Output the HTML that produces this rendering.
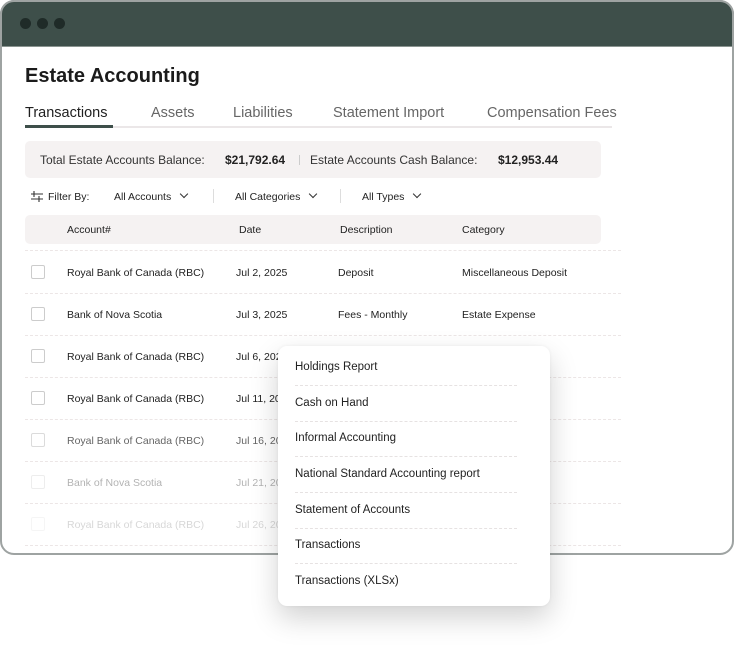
<!DOCTYPE html>
<html><head><style>
*{margin:0;padding:0;box-sizing:border-box}
body{width:752px;height:654px;background:#fff;font-family:"Liberation Sans",sans-serif;position:relative;overflow:hidden;color:#222}
.win{position:absolute;left:0;top:0;width:734px;height:555px;border-radius:14px;overflow:hidden;background:#fff}
.frame{position:absolute;left:0;top:0;width:734px;height:555px;border:2px solid #9ea3a2;border-radius:14px;pointer-events:none}
.bar{position:absolute;left:0;top:0;width:734px;height:47px;background:#3e4f4a;border-radius:14px 14px 0 0;border-bottom:1px solid #8a9490}
.dot{position:absolute;top:18px;width:11px;height:11px;border-radius:50%;background:#1f2b28}
.a{position:absolute;white-space:nowrap}
h1{position:absolute;left:25px;top:65px;font-size:20px;font-weight:bold;color:#1b1b1b}
.tab{position:absolute;top:105px;font-size:14.5px;color:#666}
.tabline{position:absolute;left:25px;top:126px;width:587px;height:2px;background:#ebe7e8}
.sum{position:absolute;left:25px;top:141px;width:576px;height:37px;background:#f5f2f2;border-radius:5px}
.hdr{position:absolute;left:25px;top:215px;width:576px;height:29px;background:#f5f2f2;border-radius:5px}
.sep{position:absolute;left:25px;width:596px;border-top:1px dashed #ece6e6}
.cb{position:absolute;left:31px;width:14px;height:14px;border:1px solid #ccc;border-radius:2px}
.r{position:absolute;font-size:10.5px;color:#222;white-space:nowrap}
.menu{position:absolute;left:278px;top:346px;width:272px;height:260px;background:#fff;border-radius:9px;box-shadow:0 12px 28px rgba(0,0,0,.18),0 0 3px rgba(0,0,0,.06)}
.mi{position:absolute;left:17px;font-size:11.5px;color:#222;white-space:nowrap}
.ms{position:absolute;left:17px;width:222px;border-top:1px dashed #e6e2e2}
.chev{display:inline-block;width:6px;height:6px;border-right:1.3px solid #333;border-bottom:1.3px solid #333;transform:rotate(45deg);margin-left:10px;position:relative;top:-3px}
</style></head><body>
<div class="win">
<div class="bar"><div class="dot" style="left:20px"></div><div class="dot" style="left:37px"></div><div class="dot" style="left:54px"></div></div>
<h1>Estate Accounting</h1>
<div class="tab" style="left:25px;color:#1f1f1f">Transactions</div>
<div class="tab" style="left:151px">Assets</div>
<div class="tab" style="left:233px">Liabilities</div>
<div class="tab" style="left:333px">Statement Import</div>
<div class="tab" style="left:487px">Compensation Fees</div>
<div class="tabline"></div>
<div style="position:absolute;left:25px;top:125px;width:88px;height:3px;background:#3e4f4a"></div>
<div class="sum"></div>
<div class="a" style="left:40px;top:153px;font-size:12px;color:#333">Total Estate Accounts Balance:</div>
<div class="a" style="left:225px;top:153px;font-size:12px;font-weight:bold">$21,792.64</div>
<div style="position:absolute;left:299px;top:155px;width:1px;height:10px;background:#ccc"></div>
<div class="a" style="left:310px;top:153px;font-size:12px;color:#333">Estate Accounts Cash Balance:</div>
<div class="a" style="left:498px;top:153px;font-size:12px;font-weight:bold">$12,953.44</div>
<svg style="position:absolute;left:31px;top:191px" width="12" height="11" viewBox="0 0 12 11"><path d="M0 3H12M0 8H12M3 0V6M8 5V11" stroke="#333" stroke-width="1.1" fill="none"/></svg>
<div class="r" style="left:48px;top:191px">Filter By:</div>
<div class="r" style="left:114px;top:191px">All Accounts<span class="chev"></span></div>
<div style="position:absolute;left:213px;top:189px;width:1px;height:14px;background:#ddd"></div>
<div class="r" style="left:235px;top:191px">All Categories<span class="chev"></span></div>
<div style="position:absolute;left:340px;top:189px;width:1px;height:14px;background:#ddd"></div>
<div class="r" style="left:362px;top:191px">All Types<span class="chev"></span></div>
<div class="hdr"></div>
<div class="r" style="left:67px;top:224px">Account#</div>
<div class="r" style="left:239px;top:224px">Date</div>
<div class="r" style="left:340px;top:224px">Description</div>
<div class="r" style="left:462px;top:224px">Category</div>
<div class="sep" style="top:250px"></div><div class="sep" style="top:293px"></div><div class="sep" style="top:335px"></div><div class="sep" style="top:377px"></div><div class="sep" style="top:419px"></div><div class="sep" style="top:461px"></div><div class="sep" style="top:503px"></div><div class="sep" style="top:545px"></div>
<div class="cb" style="top:265px"></div><div class="r" style="left:67px;top:267px">Royal Bank of Canada (RBC)</div><div class="r" style="left:236px;top:267px">Jul 2, 2025</div><div class="r" style="left:338px;top:267px">Deposit</div><div class="r" style="left:462px;top:267px">Miscellaneous Deposit</div>
<div class="cb" style="top:307px"></div><div class="r" style="left:67px;top:309px">Bank of Nova Scotia</div><div class="r" style="left:236px;top:309px">Jul 3, 2025</div><div class="r" style="left:338px;top:309px">Fees - Monthly</div><div class="r" style="left:462px;top:309px">Estate Expense</div>
<div class="cb" style="top:349px"></div><div class="r" style="left:67px;top:351px">Royal Bank of Canada (RBC)</div><div class="r" style="left:236px;top:351px">Jul 6, 2025</div>
<div class="cb" style="top:391px"></div><div class="r" style="left:67px;top:393px">Royal Bank of Canada (RBC)</div><div class="r" style="left:236px;top:393px">Jul 11, 2025</div>
<div style="opacity:.7"><div class="cb" style="top:433px"></div><div class="r" style="left:67px;top:435px">Royal Bank of Canada (RBC)</div><div class="r" style="left:236px;top:435px">Jul 16, 2025</div></div>
<div style="opacity:.35"><div class="cb" style="top:475px"></div><div class="r" style="left:67px;top:477px">Bank of Nova Scotia</div><div class="r" style="left:236px;top:477px">Jul 21, 2025</div></div>
<div style="opacity:.18"><div class="cb" style="top:517px"></div><div class="r" style="left:67px;top:519px">Royal Bank of Canada (RBC)</div><div class="r" style="left:236px;top:519px">Jul 26, 2025</div></div>
</div>
<div class="frame"></div>
<div class="menu">
<div class="mi" style="top:15px">Holdings Report</div><div class="ms" style="top:39px"></div>
<div class="mi" style="top:51px">Cash on Hand</div><div class="ms" style="top:75px"></div>
<div class="mi" style="top:86px">Informal Accounting</div><div class="ms" style="top:110px"></div>
<div class="mi" style="top:122px">National Standard Accounting report</div><div class="ms" style="top:146px"></div>
<div class="mi" style="top:158px">Statement of Accounts</div><div class="ms" style="top:182px"></div>
<div class="mi" style="top:193px">Transactions</div><div class="ms" style="top:217px"></div>
<div class="mi" style="top:229px">Transactions (XLSx)</div>
</div>
</body></html>
